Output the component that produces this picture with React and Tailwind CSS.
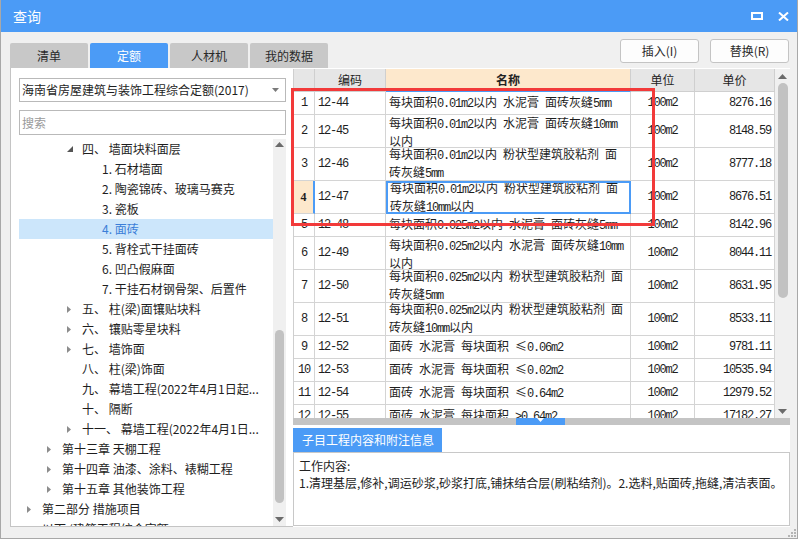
import React from "react";

// 定额查询窗口
const rows = [
  { n: 1, code: "12-44", lines: ["每块面积0.01m2以内 水泥膏 面砖灰缝5mm"], price: "8276.16" },
  { n: 2, code: "12-45", lines: ["每块面积0.01m2以内 水泥膏 面砖灰缝10mm", "以内"], price: "8148.59" },
  { n: 3, code: "12-46", lines: ["每块面积0.01m2以内 粉状型建筑胶粘剂 面", "砖灰缝5mm"], price: "8777.18" },
  { n: 4, code: "12-47", lines: ["每块面积0.01m2以内 粉状型建筑胶粘剂 面", "砖灰缝10mm以内"], price: "8676.51" },
  { n: 5, code: "12-48", lines: ["每块面积0.025m2以内 水泥膏 面砖灰缝5mm"], price: "8142.96" },
  { n: 6, code: "12-49", lines: ["每块面积0.025m2以内 水泥膏 面砖灰缝10mm", "以内"], price: "8044.11" },
  { n: 7, code: "12-50", lines: ["每块面积0.025m2以内 粉状型建筑胶粘剂 面", "砖灰缝5mm"], price: "8631.95" },
  { n: 8, code: "12-51", lines: ["每块面积0.025m2以内 粉状型建筑胶粘剂 面", "砖灰缝10mm以内"], price: "8533.11" },
  { n: 9, code: "12-52", lines: ["面砖 水泥膏 每块面积 ≤0.06m2"], price: "9781.11" },
  { n: 10, code: "12-53", lines: ["面砖 水泥膏 每块面积 ≤0.02m2"], price: "10535.94" },
  { n: 11, code: "12-54", lines: ["面砖 水泥膏 每块面积 ≤0.64m2"], price: "12979.52" },
  { n: 12, code: "12-55", lines: ["面砖 水泥膏 每块面积 >0.64m2"], price: "17182.27" },
];

// arrow: 0 none, 1 collapsed, 2 expanded
const tree = [
  { lv: 2, arrow: 2, text: "四、 墙面块料面层" },
  { lv: 3, arrow: 0, text: "1. 石材墙面" },
  { lv: 3, arrow: 0, text: "2. 陶瓷锦砖、玻璃马赛克" },
  { lv: 3, arrow: 0, text: "3. 瓷板" },
  { lv: 3, arrow: 0, text: "4. 面砖", sel: true },
  { lv: 3, arrow: 0, text: "5. 背栓式干挂面砖" },
  { lv: 3, arrow: 0, text: "6. 凹凸假麻面" },
  { lv: 3, arrow: 0, text: "7. 干挂石材钢骨架、后置件" },
  { lv: 2, arrow: 1, text: "五、 柱(梁)面镶贴块料" },
  { lv: 2, arrow: 1, text: "六、 镶贴零星块料" },
  { lv: 2, arrow: 1, text: "七、 墙饰面" },
  { lv: 2, arrow: 0, text: "八、 柱(梁)饰面" },
  { lv: 2, arrow: 0, text: "九、 幕墙工程(2022年4月1日起..." },
  { lv: 2, arrow: 0, text: "十、 隔断" },
  { lv: 2, arrow: 1, text: "十一、 幕墙工程(2022年4月1日..." },
  { lv: 1, arrow: 1, text: "第十三章 天棚工程" },
  { lv: 1, arrow: 1, text: "第十四章 油漆、涂料、裱糊工程" },
  { lv: 1, arrow: 1, text: "第十五章 其他装饰工程" },
  { lv: 0, arrow: 1, text: "第二部分 措施项目" },
  { lv: 0, arrow: 0, text: "以下 (建筑工程综合定额" },
];

const indent = ["pl-[7px]", "pl-[27px]", "pl-[47px]", "pl-[67px]"];

// ASCII 部分用等宽半角字体
const Mix = ({ text }) =>
  text.split(/([\x20-\x7e]+)/).map((s, i) =>
    /^[\x20-\x7e]+$/.test(s) ? (
      <span key={i} className="font-['Liberation_Mono'] tracking-[-1.2px] whitespace-pre">
        {s}
      </span>
    ) : (
      <span key={i}>{s}</span>
    )
  );

const UpArrow = () => (
  <svg width="9" height="5" viewBox="0 0 9 5">
    <polygon points="0,5 4.5,0 9,5" fill="#6b6b6b" />
  </svg>
);
const DownArrow = () => (
  <svg width="9" height="5" viewBox="0 0 9 5">
    <polygon points="0,0 9,0 4.5,5" fill="#6b6b6b" />
  </svg>
);

const App = () => {
  return (
    <div className="w-[800px] h-[540px] bg-white font-['Noto_Sans_CJK_SC',sans-serif] text-[12px] text-[#1e1e1e]">
      <div className="relative w-[798px] h-[539px] bg-[#f0f0f0] border-x border-b border-[#a8a8a8] flex flex-col">
        {/* 标题栏 */}
        <div className="h-[32px] bg-[#4b9bf6] flex items-center pl-[12px] pr-[8px] text-white">
          <span className="text-[14px]">查询</span>
          <div className="ml-auto flex items-center gap-[15px]">
            <svg width="12" height="8" viewBox="0 0 12 8">
              <rect x="1" y="1" width="10" height="6" fill="none" stroke="#fff" strokeWidth="2" />
            </svg>
            <svg width="11" height="9" viewBox="0 0 11 9">
              <path d="M1 0.5 L10 8.5 M10 0.5 L1 8.5" stroke="#fff" strokeWidth="2" />
            </svg>
          </div>
        </div>

        {/* 页签与按钮 */}
        <div className="h-[36px] flex justify-between pl-[9px] pr-[8px]">
          <div className="self-end flex gap-[2px]">
            {["清单", "定额", "人材机", "我的数据"].map((t) => (
              <div
                key={t}
                className={
                  t === "定额"
                    ? "w-[78px] h-[25px] rounded-t-[2px] bg-[#4b9bf6] text-white flex items-center justify-center text-[12px]"
                    : "w-[78px] h-[25px] rounded-t-[2px] bg-[#c8c8c8] text-[#2a2a2a] flex items-center justify-center text-[12px]"
                }
              >
                {t}
              </div>
            ))}
          </div>
          <div className="self-start mt-[7px] flex gap-[11px]">
            <button className="w-[79px] h-[24px] bg-[#fdfdfd] border border-[#c4c4c4] rounded-[3px] text-[12px] text-[#2a2a2a]">
              插入(I)
            </button>
            <button className="w-[79px] h-[24px] bg-[#fdfdfd] border border-[#c4c4c4] rounded-[3px] text-[12px] text-[#2a2a2a]">
              替换(R)
            </button>
          </div>
        </div>

        {/* 主体 */}
        <div className="h-[459px] flex pl-[9px]">
          {/* 左侧定额库树 */}
          <div className="w-[283px] bg-white border-l border-b border-[#c4c4c4] flex flex-col pl-[8px] pt-[10px]">
            <div className="w-[267px] h-[24px] border border-[#b9b9b9] flex items-center pl-[2px] pr-[6px] text-[12px]">
              <span className="whitespace-nowrap">海南省房屋建筑与装饰工程综合定额(2017)</span>
              <svg className="ml-auto" width="7" height="4" viewBox="0 0 7 4">
                <polygon points="0,0 7,0 3.5,4" fill="#7a7a7a" />
              </svg>
            </div>
            <div className="w-[267px] h-[25px] mt-[8px] border border-[#b9b9b9] flex items-center pl-[2px] text-[12px] text-[#9a9a9a]">
              搜索
            </div>
            <div className="mt-[4px] flex-1 min-h-0 flex">
              <div className="w-[254px] overflow-hidden">
                {tree.map((r, i) => (
                  <div
                    key={i}
                    className={
                      "h-[20px] flex items-center whitespace-nowrap text-[12px] " +
                      indent[r.lv] +
                      (r.sel ? " bg-[#cce6fb] text-[#3a7ed8]" : "")
                    }
                  >
                    <span className="w-[16px] shrink-0 flex items-center pl-[1px]">
                      {r.arrow === 1 && (
                        <svg width="4" height="7" viewBox="0 0 4 7">
                          <polygon points="0,0 4,3.5 0,7" fill="#8c8c8c" />
                        </svg>
                      )}
                      {r.arrow === 2 && (
                        <svg width="6" height="6" viewBox="0 0 6 6">
                          <polygon points="6,0 6,6 0,6" fill="#555" />
                        </svg>
                      )}
                    </span>
                    <span>{r.text}</span>
                  </div>
                ))}
              </div>
              <div className="w-[13px] bg-[#f0f0f0] flex flex-col items-center">
                <div className="h-[10px] flex items-center pt-[1px]">
                  <UpArrow />
                </div>
                <div className="flex-1">
                  <div className="mt-[181px] w-[9px] h-[173px] rounded-full bg-[#c2c2c2]" />
                </div>
                <div className="h-[14px] flex items-center">
                  <DownArrow />
                </div>
              </div>
            </div>
          </div>

          {/* 右侧定额列表 */}
          <div className="w-[497px] bg-white flex flex-col pt-[1px]">
            <div className="h-[349px] flex border-l border-[#cfcfcf]">
              <div className="w-[481px] flex flex-col">
                <div className="h-[23px] flex shrink-0 text-[12px] text-[#222]">
                  <div className="w-[21px] bg-[#e6e6e6] border-r border-b border-[#cfcfcf]" />
                  <div className="w-[71px] bg-[#e6e6e6] border-r border-b border-[#cfcfcf] flex items-center justify-center">编码</div>
                  <div className="w-[245px] bg-[#fde8cc] border-r border-b border-r-[#cfcfcf] border-b-[#4b9bf6] flex items-center justify-center font-bold">名称</div>
                  <div className="w-[64px] bg-[#e6e6e6] border-r border-b border-[#cfcfcf] flex items-center justify-center">单位</div>
                  <div className="w-[80px] bg-[#e6e6e6] border-r border-b border-[#cfcfcf] flex items-center justify-center">单价</div>
                </div>
                <div className="flex-1 min-h-0 overflow-hidden">
                  {rows.map((r) => {
                    const sel = r.n === 4;
                    return (
                      <div key={r.n} className={r.lines.length > 1 ? "h-[33px] flex" : "h-[23px] flex"}>
                        <div
                          className={
                            sel
                              ? "w-[21px] bg-[#fde8cc] border-r-2 border-r-[#4b9bf6] border-b border-b-[#d4d4d4] flex items-center justify-center font-bold font-['Liberation_Serif']"
                              : "w-[21px] border-r border-b border-[#d4d4d4] flex items-center justify-center font-['Liberation_Mono'] tracking-[-1.2px]"
                          }
                        >
                          {r.n}
                        </div>
                        <div className="w-[71px] border-r border-b border-[#d4d4d4] flex items-center pl-[3px]">
                          <Mix text={r.code} />
                        </div>
                        <div
                          className={
                            sel
                              ? "w-[245px] border-2 border-[#4b9bf6] flex flex-col justify-center pl-[2px] leading-[15px] whitespace-nowrap overflow-hidden"
                              : "w-[245px] border-r border-b border-[#d4d4d4] flex flex-col justify-center pl-[3px] leading-[15px] whitespace-nowrap overflow-hidden"
                          }
                        >
                          {r.lines.map((l, i) => (
                            <div key={i}>
                              <Mix text={l} />
                            </div>
                          ))}
                        </div>
                        <div className="w-[64px] border-r border-b border-[#d4d4d4] flex items-center justify-center">
                          <Mix text="100m2" />
                        </div>
                        <div className="w-[80px] border-r border-b border-[#d4d4d4] flex items-center justify-end pr-[3px]">
                          <Mix text={r.price} />
                        </div>
                      </div>
                    );
                  })}
                </div>
              </div>
              <div className="w-[15px] bg-[#f0f0f0] flex flex-col items-center">
                <div className="h-[14px] flex items-center">
                  <UpArrow />
                </div>
                <div className="flex-1">
                  <div className="w-[10px] h-[215px] rounded-full bg-[#c2c2c2]" />
                </div>
                <div className="h-[14px] flex items-center">
                  <DownArrow />
                </div>
              </div>
            </div>

            {/* 分隔条 */}
            <div className="h-[7px] bg-[#c4c4c4] flex">
              <div className="ml-[223px] w-[49px] bg-[#4b9bf6] flex justify-center">
                <svg width="7" height="4" viewBox="0 0 7 4">
                  <polygon points="0,0 7,0 3.5,4" fill="#fff" />
                </svg>
              </div>
            </div>

            <div className="pt-[3px] flex-1 flex flex-col">
              <div className="w-[149px] h-[24px] bg-[#4b9bf6] text-white text-[12px] flex items-center pl-[9px] whitespace-nowrap">
                子目工程内容和附注信息
              </div>
              <div className="h-[74px] border border-[#c8c8c8] pl-[5px] pt-[4px] leading-[17px] text-[12px] text-[#222]">
                <div>工作内容:</div>
                <div className="whitespace-nowrap">
                  1.清理基层,修补,调运砂浆,砂浆打底,铺抹结合层(刷粘结剂)。2.选料,贴面砖,拖缝,清洁表面。
                </div>
              </div>
            </div>
          </div>
        </div>

        {/* 调整大小手柄 */}
        <svg className="absolute right-[1px] bottom-[1px]" width="8" height="8" viewBox="0 0 8 8">
          <rect x="6" y="0" width="2" height="2" fill="#b5b5b5" />
          <rect x="3" y="3" width="2" height="2" fill="#b5b5b5" />
          <rect x="6" y="3" width="2" height="2" fill="#b5b5b5" />
          <rect x="0" y="6" width="2" height="2" fill="#b5b5b5" />
          <rect x="3" y="6" width="2" height="2" fill="#b5b5b5" />
          <rect x="6" y="6" width="2" height="2" fill="#b5b5b5" />
        </svg>

        {/* 红色标注框 */}
        <div className="absolute left-[290px] top-[88px] w-[364px] h-[138px] border-[3px] border-[#f23a3a]" />
      </div>
    </div>
  );
};

export default App;
